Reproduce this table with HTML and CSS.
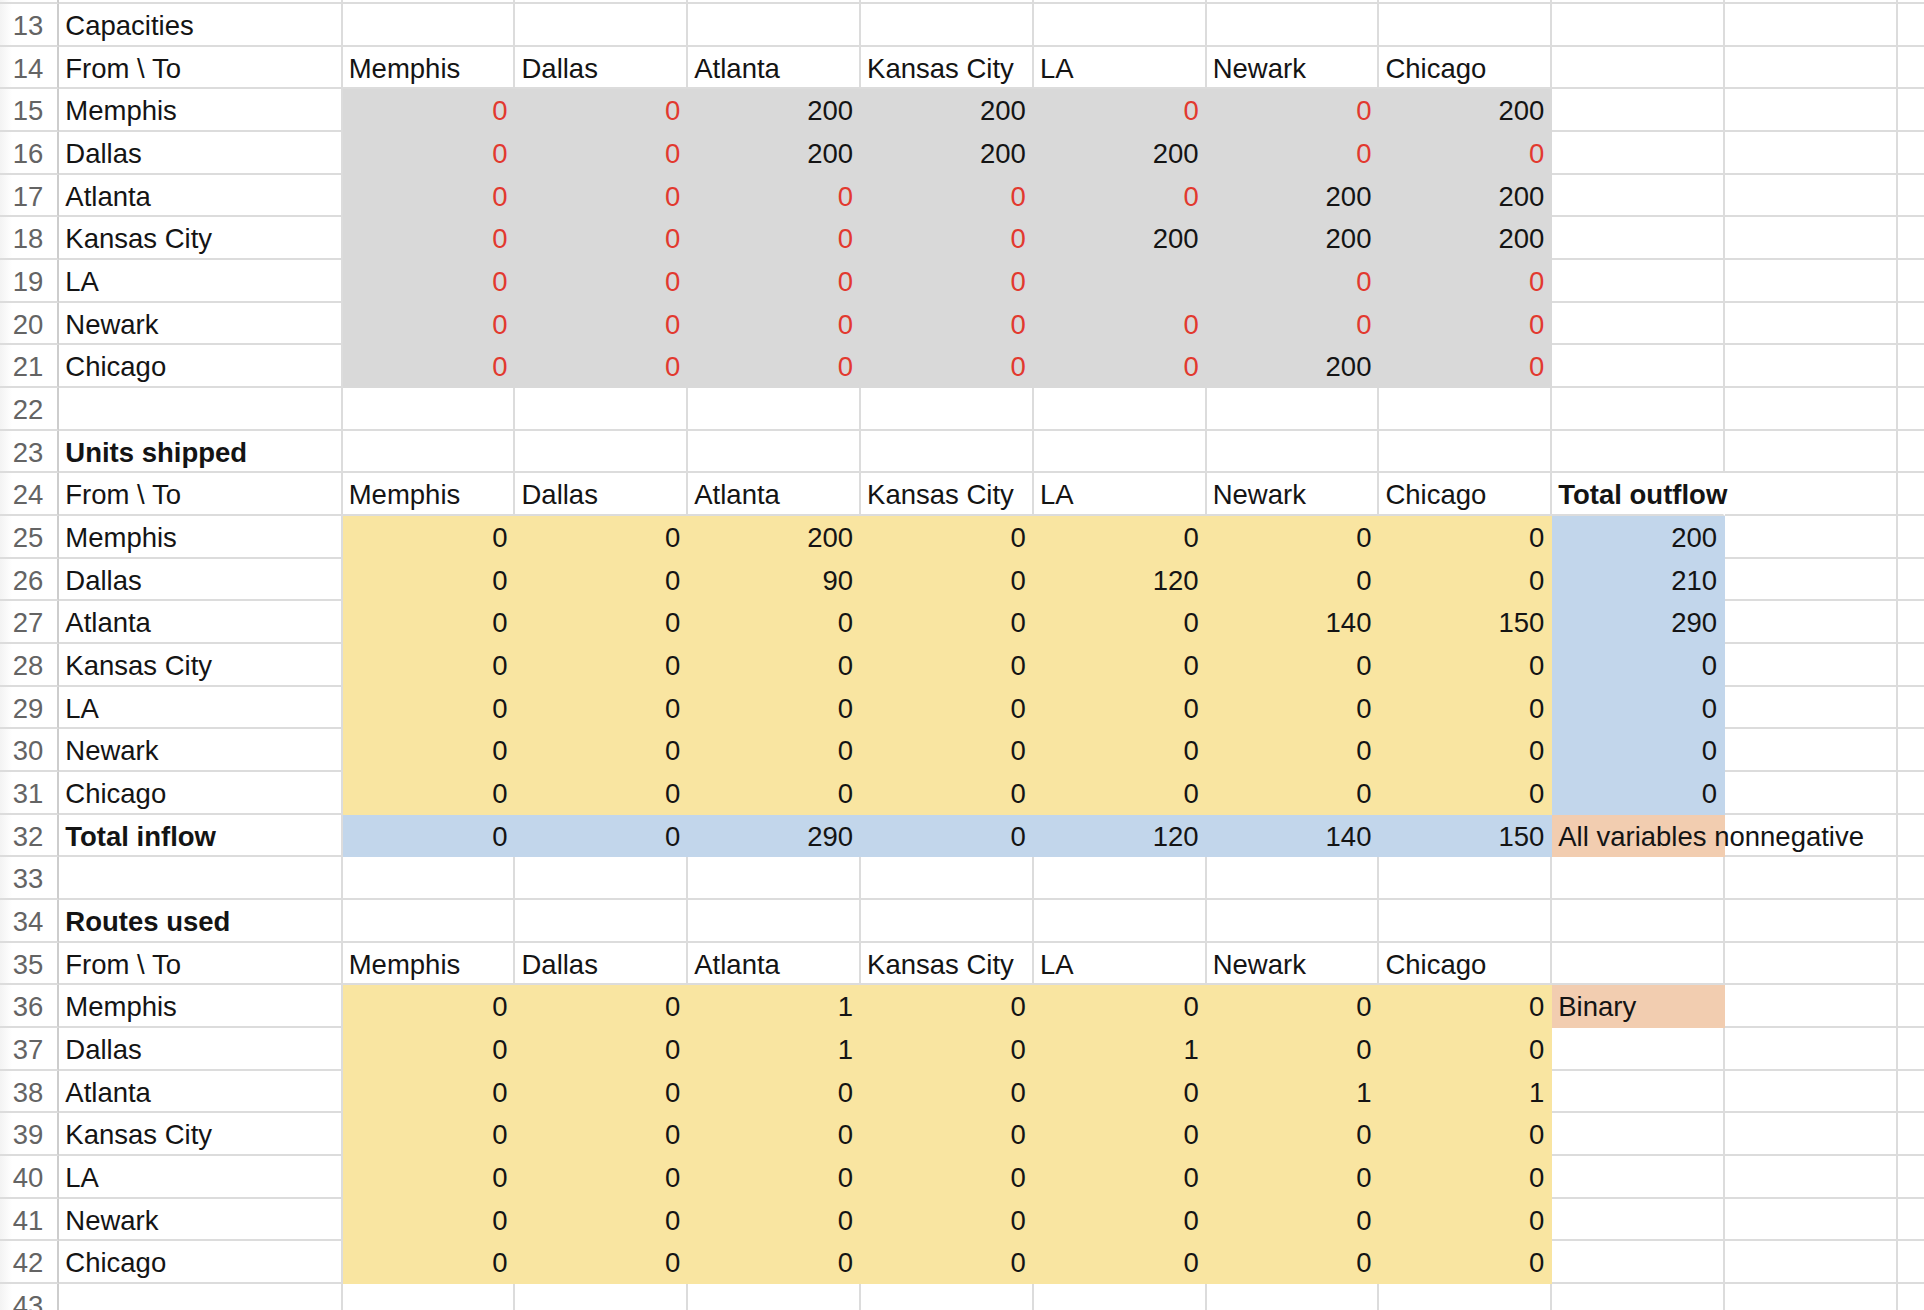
FILE: index.html
```html
<!DOCTYPE html>
<html>
<head>
<meta charset="utf-8">
<title>Sheet</title>
<link rel="stylesheet" href="styles.css">
</head>
<body>
<div class="sheet">
  <div class="row top"><div class="rh"></div><div class="c"></div><div class="c"></div><div class="c"></div><div class="c"></div><div class="c"></div><div class="c"></div><div class="c"></div><div class="c"></div><div class="c"></div><div class="c"></div><div class="c"></div></div>

  <div class="row"><div class="rh">13</div><div class="c">Capacities</div><div class="c"></div><div class="c"></div><div class="c"></div><div class="c"></div><div class="c"></div><div class="c"></div><div class="c"></div><div class="c"></div><div class="c"></div><div class="c"></div></div>
  <div class="row"><div class="rh">14</div><div class="c">From \ To</div><div class="c">Memphis</div><div class="c">Dallas</div><div class="c">Atlanta</div><div class="c">Kansas City</div><div class="c">LA</div><div class="c">Newark</div><div class="c">Chicago</div><div class="c"></div><div class="c"></div><div class="c"></div></div>
  <div class="row"><div class="rh">15</div><div class="c">Memphis</div><div class="c n g r">0</div><div class="c n g r">0</div><div class="c n g">200</div><div class="c n g">200</div><div class="c n g r">0</div><div class="c n g r">0</div><div class="c n g">200</div><div class="c"></div><div class="c"></div><div class="c"></div></div>
  <div class="row"><div class="rh">16</div><div class="c">Dallas</div><div class="c n g r">0</div><div class="c n g r">0</div><div class="c n g">200</div><div class="c n g">200</div><div class="c n g">200</div><div class="c n g r">0</div><div class="c n g r">0</div><div class="c"></div><div class="c"></div><div class="c"></div></div>
  <div class="row"><div class="rh">17</div><div class="c">Atlanta</div><div class="c n g r">0</div><div class="c n g r">0</div><div class="c n g r">0</div><div class="c n g r">0</div><div class="c n g r">0</div><div class="c n g">200</div><div class="c n g">200</div><div class="c"></div><div class="c"></div><div class="c"></div></div>
  <div class="row"><div class="rh">18</div><div class="c">Kansas City</div><div class="c n g r">0</div><div class="c n g r">0</div><div class="c n g r">0</div><div class="c n g r">0</div><div class="c n g">200</div><div class="c n g">200</div><div class="c n g">200</div><div class="c"></div><div class="c"></div><div class="c"></div></div>
  <div class="row"><div class="rh">19</div><div class="c">LA</div><div class="c n g r">0</div><div class="c n g r">0</div><div class="c n g r">0</div><div class="c n g r">0</div><div class="c n g"></div><div class="c n g r">0</div><div class="c n g r">0</div><div class="c"></div><div class="c"></div><div class="c"></div></div>
  <div class="row"><div class="rh">20</div><div class="c">Newark</div><div class="c n g r">0</div><div class="c n g r">0</div><div class="c n g r">0</div><div class="c n g r">0</div><div class="c n g r">0</div><div class="c n g r">0</div><div class="c n g r">0</div><div class="c"></div><div class="c"></div><div class="c"></div></div>
  <div class="row"><div class="rh">21</div><div class="c">Chicago</div><div class="c n g r">0</div><div class="c n g r">0</div><div class="c n g r">0</div><div class="c n g r">0</div><div class="c n g r">0</div><div class="c n g">200</div><div class="c n g r">0</div><div class="c"></div><div class="c"></div><div class="c"></div></div>
  <div class="row"><div class="rh">22</div><div class="c"></div><div class="c"></div><div class="c"></div><div class="c"></div><div class="c"></div><div class="c"></div><div class="c"></div><div class="c"></div><div class="c"></div><div class="c"></div><div class="c"></div></div>

  <div class="row"><div class="rh">23</div><div class="c bd">Units shipped</div><div class="c"></div><div class="c"></div><div class="c"></div><div class="c"></div><div class="c"></div><div class="c"></div><div class="c"></div><div class="c"></div><div class="c"></div><div class="c"></div></div>
  <div class="row"><div class="rh">24</div><div class="c">From \ To</div><div class="c">Memphis</div><div class="c">Dallas</div><div class="c">Atlanta</div><div class="c">Kansas City</div><div class="c">LA</div><div class="c">Newark</div><div class="c">Chicago</div><div class="c bd ov">Total outflow</div><div class="c"></div><div class="c"></div></div>
  <div class="row"><div class="rh">25</div><div class="c">Memphis</div><div class="c n y">0</div><div class="c n y">0</div><div class="c n y">200</div><div class="c n y">0</div><div class="c n y">0</div><div class="c n y">0</div><div class="c n y">0</div><div class="c n b">200</div><div class="c"></div><div class="c"></div></div>
  <div class="row"><div class="rh">26</div><div class="c">Dallas</div><div class="c n y">0</div><div class="c n y">0</div><div class="c n y">90</div><div class="c n y">0</div><div class="c n y">120</div><div class="c n y">0</div><div class="c n y">0</div><div class="c n b">210</div><div class="c"></div><div class="c"></div></div>
  <div class="row"><div class="rh">27</div><div class="c">Atlanta</div><div class="c n y">0</div><div class="c n y">0</div><div class="c n y">0</div><div class="c n y">0</div><div class="c n y">0</div><div class="c n y">140</div><div class="c n y">150</div><div class="c n b">290</div><div class="c"></div><div class="c"></div></div>
  <div class="row"><div class="rh">28</div><div class="c">Kansas City</div><div class="c n y">0</div><div class="c n y">0</div><div class="c n y">0</div><div class="c n y">0</div><div class="c n y">0</div><div class="c n y">0</div><div class="c n y">0</div><div class="c n b">0</div><div class="c"></div><div class="c"></div></div>
  <div class="row"><div class="rh">29</div><div class="c">LA</div><div class="c n y">0</div><div class="c n y">0</div><div class="c n y">0</div><div class="c n y">0</div><div class="c n y">0</div><div class="c n y">0</div><div class="c n y">0</div><div class="c n b">0</div><div class="c"></div><div class="c"></div></div>
  <div class="row"><div class="rh">30</div><div class="c">Newark</div><div class="c n y">0</div><div class="c n y">0</div><div class="c n y">0</div><div class="c n y">0</div><div class="c n y">0</div><div class="c n y">0</div><div class="c n y">0</div><div class="c n b">0</div><div class="c"></div><div class="c"></div></div>
  <div class="row"><div class="rh">31</div><div class="c">Chicago</div><div class="c n y">0</div><div class="c n y">0</div><div class="c n y">0</div><div class="c n y">0</div><div class="c n y">0</div><div class="c n y">0</div><div class="c n y">0</div><div class="c n b">0</div><div class="c"></div><div class="c"></div></div>
  <div class="row"><div class="rh">32</div><div class="c bd">Total inflow</div><div class="c n b">0</div><div class="c n b">0</div><div class="c n b">290</div><div class="c n b">0</div><div class="c n b">120</div><div class="c n b">140</div><div class="c n b">150</div><div class="c o ov">All variables nonnegative</div><div class="c"></div><div class="c"></div></div>
  <div class="row"><div class="rh">33</div><div class="c"></div><div class="c"></div><div class="c"></div><div class="c"></div><div class="c"></div><div class="c"></div><div class="c"></div><div class="c"></div><div class="c"></div><div class="c"></div><div class="c"></div></div>

  <div class="row"><div class="rh">34</div><div class="c bd">Routes used</div><div class="c"></div><div class="c"></div><div class="c"></div><div class="c"></div><div class="c"></div><div class="c"></div><div class="c"></div><div class="c"></div><div class="c"></div><div class="c"></div></div>
  <div class="row"><div class="rh">35</div><div class="c">From \ To</div><div class="c">Memphis</div><div class="c">Dallas</div><div class="c">Atlanta</div><div class="c">Kansas City</div><div class="c">LA</div><div class="c">Newark</div><div class="c">Chicago</div><div class="c"></div><div class="c"></div><div class="c"></div></div>
  <div class="row"><div class="rh">36</div><div class="c">Memphis</div><div class="c n y">0</div><div class="c n y">0</div><div class="c n y">1</div><div class="c n y">0</div><div class="c n y">0</div><div class="c n y">0</div><div class="c n y">0</div><div class="c o">Binary</div><div class="c"></div><div class="c"></div></div>
  <div class="row"><div class="rh">37</div><div class="c">Dallas</div><div class="c n y">0</div><div class="c n y">0</div><div class="c n y">1</div><div class="c n y">0</div><div class="c n y">1</div><div class="c n y">0</div><div class="c n y">0</div><div class="c"></div><div class="c"></div><div class="c"></div></div>
  <div class="row"><div class="rh">38</div><div class="c">Atlanta</div><div class="c n y">0</div><div class="c n y">0</div><div class="c n y">0</div><div class="c n y">0</div><div class="c n y">0</div><div class="c n y">1</div><div class="c n y">1</div><div class="c"></div><div class="c"></div><div class="c"></div></div>
  <div class="row"><div class="rh">39</div><div class="c">Kansas City</div><div class="c n y">0</div><div class="c n y">0</div><div class="c n y">0</div><div class="c n y">0</div><div class="c n y">0</div><div class="c n y">0</div><div class="c n y">0</div><div class="c"></div><div class="c"></div><div class="c"></div></div>
  <div class="row"><div class="rh">40</div><div class="c">LA</div><div class="c n y">0</div><div class="c n y">0</div><div class="c n y">0</div><div class="c n y">0</div><div class="c n y">0</div><div class="c n y">0</div><div class="c n y">0</div><div class="c"></div><div class="c"></div><div class="c"></div></div>
  <div class="row"><div class="rh">41</div><div class="c">Newark</div><div class="c n y">0</div><div class="c n y">0</div><div class="c n y">0</div><div class="c n y">0</div><div class="c n y">0</div><div class="c n y">0</div><div class="c n y">0</div><div class="c"></div><div class="c"></div><div class="c"></div></div>
  <div class="row"><div class="rh">42</div><div class="c">Chicago</div><div class="c n y">0</div><div class="c n y">0</div><div class="c n y">0</div><div class="c n y">0</div><div class="c n y">0</div><div class="c n y">0</div><div class="c n y">0</div><div class="c"></div><div class="c"></div><div class="c"></div></div>
  <div class="row"><div class="rh">43</div><div class="c"></div><div class="c"></div><div class="c"></div><div class="c"></div><div class="c"></div><div class="c"></div><div class="c"></div><div class="c"></div><div class="c"></div><div class="c"></div><div class="c"></div></div>
</div>
</body>
</html>
```

FILE: styles.css
```css
html, body {
  margin: 0;
  padding: 0;
  background: #ffffff;
  overflow: hidden;
}

.sheet {
  display: flex;
  flex-direction: column;
  width: 1924px;
  height: 1310px;
  overflow: hidden;
  font-family: "Liberation Sans", Arial, sans-serif;
  font-size: 27.5px;
  color: #141414;
}

.row {
  display: grid;
  grid-template-columns: 59.3px 283.4px repeat(9, 172.8px) 30px;
  height: 42.68px;
  flex: none;
}

.row.top {
  height: 4px;
}

.rh,
.c {
  box-sizing: border-box;
  border-right: 2px solid #dcdcdc;
  border-bottom: 2px solid #dcdcdc;
  padding-top: 4px;
  line-height: 36.68px;
  white-space: nowrap;
  overflow: hidden;
}

.row.top .rh,
.row.top .c {
  padding-top: 0;
  line-height: 0;
}

.rh {
  text-align: right;
  padding-right: 14px;
  color: #646464;
  border-right-color: #cdcdcd;
  background: linear-gradient(to right, #f3f3f3 0px, #ffffff 12px);
}

.c {
  padding-left: 6px;
  padding-right: 6px;
}

.n {
  text-align: right;
}

.bd {
  font-weight: bold;
}

.r {
  color: #e2392f;
}

.g {
  background: #d9d9d9;
  border-color: transparent;
}

.y {
  background: #f9e5a1;
  border-color: transparent;
}

.b {
  background: #c2d6eb;
  border-color: transparent;
}

.o {
  background: #f2cdb0;
  border-color: transparent;
}

.ov {
  overflow: visible;
  border-right-color: transparent;
}
```
